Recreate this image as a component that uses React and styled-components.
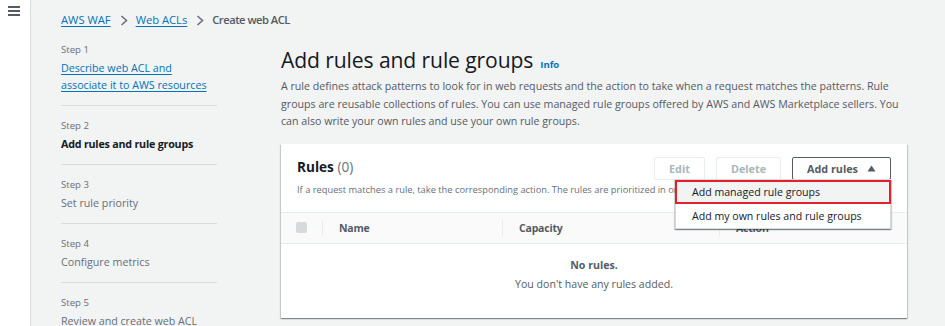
import React from "react";
import styled, { createGlobalStyle } from "styled-components";

const Global = createGlobalStyle`
  html, body { margin: 0; padding: 0; }
  body {
    font-family: "Open Sans", "Noto Sans", Arial, sans-serif;
    background: #f2f3f3;
    color: #16191f;
    -webkit-font-smoothing: antialiased;
  }
  * { box-sizing: border-box; }
`;

const Page = styled.div`
  display: flex;
  width: 945px;
  height: 326px;
  overflow: hidden;
  background: #f2f3f3;
`;

const SideNav = styled.div`
  width: 31px;
  flex: none;
  background: #ffffff;
  border-right: 1px solid #d5dbdb;
  padding: 6px 0 0 8px;
  display: flex;
  flex-direction: column;
  gap: 2px;
`;

const Bar = styled.span`
  display: block;
  width: 12px;
  height: 2px;
  background: #545b64;
`;

const Main = styled.div`
  flex: 1;
  padding: 13px 38px 0 30px;
  min-width: 0;
`;

const Crumbs = styled.nav`
  display: flex;
  align-items: center;
  height: 14px;
  font-size: 11.2px;
  line-height: 14px;
  white-space: nowrap;
`;

const CrumbLink = styled.a`
  color: #0073bb;
  text-decoration: underline;
  text-underline-offset: 2px;
  text-decoration-thickness: 1px;
`;

const CrumbCurrent = styled.span`
  color: #545b64;
  font-weight: 600;
  letter-spacing: -0.5px;
`;

const Chevron = styled.svg`
  width: 8px;
  height: 11px;
  margin: 0 8px 0 9px;
  flex: none;
`;

const Layout = styled.div`
  display: grid;
  grid-template-columns: 156px 1fr;
  column-gap: 64px;
  margin-top: 15px;
`;

const Steps = styled.ol`
  list-style: none;
  margin: 0;
  padding: 0;
`;

const Step = styled.li`
  padding: ${(p) => (p.$first ? "0" : "12px")} 0 11px;
  border-bottom: ${(p) => (p.$last ? "none" : "1px solid #d5dbdb")};
`;

const StepLabel = styled.div`
  font-size: 9.6px;
  line-height: 16px;
  color: #687078;
  margin-bottom: 2px;
`;

const StepTitle = styled.div`
  font-size: 10.7px;
  line-height: 17px;
  white-space: nowrap;
  color: ${(p) => (p.$active ? "#16191f" : "#687078")};
  font-weight: ${(p) => (p.$active ? 700 : 400)};
  letter-spacing: ${(p) => (p.$active ? "-0.2px" : "0")};
`;

const StepLink = styled.a`
  color: #0073bb;
  text-decoration: underline;
  text-underline-offset: 2px;
`;

const Content = styled.div`
  min-width: 0;
`;

const Heading = styled.h1`
  margin: 3px 0 0;
  height: 30px;
  font-size: 21.1px;
  line-height: 30px;
  font-weight: 400;
  letter-spacing: -0.1px;
  color: #16191f;
  display: flex;
  align-items: baseline;
  gap: 7px;
`;

const Info = styled.a`
  font-size: 9.5px;
  line-height: 12px;
  font-weight: 700;
  color: #0073bb;
  text-decoration: none;
  letter-spacing: 0;
`;

const Lead = styled.p`
  margin: 3px 0 0;
  font-size: 10.65px;
  line-height: 17.5px;
  color: #545b64;
`;

const Card = styled.section`
  margin-top: 13px;
  width: 626px;
  background: #ffffff;
  box-shadow: 0 1px 1px 0 rgba(0, 28, 36, 0.3), 1px 1px 1px 0 rgba(0, 28, 36, 0.15),
    -1px 1px 1px 0 rgba(0, 28, 36, 0.15);
`;

const CardHeader = styled.div`
  padding: 13px 16px 15px;
  border-bottom: 1px solid #eaeded;
`;

const HeaderRow = styled.div`
  display: flex;
  justify-content: space-between;
  align-items: flex-start;
`;

const CardTitle = styled.h2`
  margin: 0;
  font-size: 13.6px;
  line-height: 20px;
  font-weight: 700;
  color: #16191f;
`;

const Count = styled.span`
  font-weight: 400;
  color: #687078;
`;

const Actions = styled.div`
  display: flex;
  gap: 11px;
`;

const Button = styled.button`
  height: 23px;
  padding: 0 ${(p) => p.$pad || 14}px;
  background: #ffffff;
  border: 1px solid ${(p) => (p.disabled ? "#eaeded" : "#545b64")};
  border-radius: 2px;
  font-family: inherit;
  font-size: 10.8px;
  font-weight: 700;
  color: ${(p) => (p.disabled ? "#aab7b8" : "#545b64")};
  display: flex;
  align-items: center;
  gap: 9px;
  cursor: pointer;
`;

const MenuWrap = styled.div`
  position: relative;
`;

const Menu = styled.ul`
  position: absolute;
  top: calc(100% - 1px);
  right: 0;
  width: 216px;
  margin: 0;
  padding: 0;
  list-style: none;
  background: #ffffff;
  border: 1px solid #d5dbdb;
  box-shadow: 0 1px 1px 0 rgba(0, 28, 36, 0.3), 1px 1px 1px 0 rgba(0, 28, 36, 0.15),
    -1px 1px 1px 0 rgba(0, 28, 36, 0.15);
  z-index: 5;
`;

const MenuItem = styled.li`
  height: 24px;
  padding-left: ${(p) => (p.$marked ? 15 : 16)}px;
  display: flex;
  align-items: center;
  font-size: 10.6px;
  color: #16191f;
  white-space: nowrap;
  background: ${(p) => (p.$marked ? "#f2f3f3" : "#ffffff")};
  border: ${(p) => (p.$marked ? "2px solid #e5202c" : "none")};
  margin: ${(p) => (p.$marked ? "0 -1px" : "0")};
`;

const CardDesc = styled.p`
  margin: 3px 0 0;
  font-size: 9.3px;
  line-height: 14px;
  color: #687078;
  white-space: nowrap;
`;

const TableHead = styled.div`
  display: grid;
  grid-template-columns: 41px 180px 217px 1fr;
  height: 31px;
  align-items: center;
  background: #fafafa;
  border-bottom: 1px solid #eaeded;
`;

const Th = styled.div`
  height: 16px;
  display: flex;
  align-items: center;
  padding-left: ${(p) => (p.$first ? 15 : 16)}px;
  border-left: ${(p) => (p.$first ? "none" : "1px solid #eaeded")};
  font-size: 10.5px;
  font-weight: 700;
  letter-spacing: -0.2px;
  color: #545b64;
`;

const Check = styled.span`
  width: 11px;
  height: 11px;
  border-radius: 2px;
  background: #d5dbdb;
`;

const Empty = styled.div`
  padding: 13px 0 26px;
  text-align: center;
  color: #545b64;
  font-size: 10.6px;
  line-height: 16px;
`;

const EmptyTitle = styled.div`
  font-weight: 700;
  margin-bottom: 3px;
`;

const Chev = () => (
  <Chevron viewBox="0 0 8 11">
    <path d="M1.5 1 L6.5 5.5 L1.5 10" fill="none" stroke="#687078" strokeWidth="1.6" />
  </Chevron>
);

const steps = [
  { n: 1, title: "Describe web ACL and associate it to AWS resources", link: true },
  { n: 2, title: "Add rules and rule groups", active: true },
  { n: 3, title: "Set rule priority" },
  { n: 4, title: "Configure metrics" },
  { n: 5, title: "Review and create web ACL" },
];

export default function App() {
  return (
    <>
      <Global />
      <Page>
        <SideNav>
          <Bar />
          <Bar />
          <Bar />
        </SideNav>
        <Main>
          <Crumbs>
            <CrumbLink href="#">AWS WAF</CrumbLink>
            <Chev />
            <CrumbLink href="#">Web ACLs</CrumbLink>
            <Chev />
            <CrumbCurrent>Create web ACL</CrumbCurrent>
          </Crumbs>
          <Layout>
            <Steps>
              {steps.map((s, i) => (
                <Step key={s.n} $first={i === 0} $last={i === steps.length - 1}>
                  <StepLabel>Step {s.n}</StepLabel>
                  <StepTitle $active={s.active}>
                    {s.link ? (
                      <StepLink href="#">
                        Describe web ACL and
                        <br />
                        associate it to AWS resources
                      </StepLink>
                    ) : (
                      s.title
                    )}
                  </StepTitle>
                </Step>
              ))}
            </Steps>
            <Content>
              <Heading>
                Add rules and rule groups <Info href="#">Info</Info>
              </Heading>
              <Lead>
                A rule defines attack patterns to look for in web requests and the action to take
                when a request matches the patterns. Rule groups are reusable collections of rules.
                You can use managed rule groups offered by AWS and AWS Marketplace sellers. You can
                also write your own rules and use your own rule groups.
              </Lead>
              <Card>
                <CardHeader>
                  <HeaderRow>
                    <CardTitle>
                      Rules <Count>(0)</Count>
                    </CardTitle>
                    <Actions>
                      <Button disabled>Edit</Button>
                      <Button disabled>Delete</Button>
                      <MenuWrap>
                        <Button>
                          Add rules
                          <svg width="9" height="7" viewBox="0 0 9 7">
                            <path d="M4.5 0.5 L8.5 6.5 L0.5 6.5 Z" fill="#545b64" />
                          </svg>
                        </Button>
                        <Menu>
                          <MenuItem $marked>Add managed rule groups</MenuItem>
                          <MenuItem>Add my own rules and rule groups</MenuItem>
                        </Menu>
                      </MenuWrap>
                    </Actions>
                  </HeaderRow>
                  <CardDesc>
                    If a request matches a rule, take the corresponding action. The rules are
                    prioritized in order they appear.
                  </CardDesc>
                </CardHeader>
                <TableHead>
                  <Th $first>
                    <Check />
                  </Th>
                  <Th>Name</Th>
                  <Th>Capacity</Th>
                  <Th>Action</Th>
                </TableHead>
                <Empty>
                  <EmptyTitle>No rules.</EmptyTitle>
                  <div>You don't have any rules added.</div>
                </Empty>
              </Card>
            </Content>
          </Layout>
        </Main>
      </Page>
    </>
  );
}
